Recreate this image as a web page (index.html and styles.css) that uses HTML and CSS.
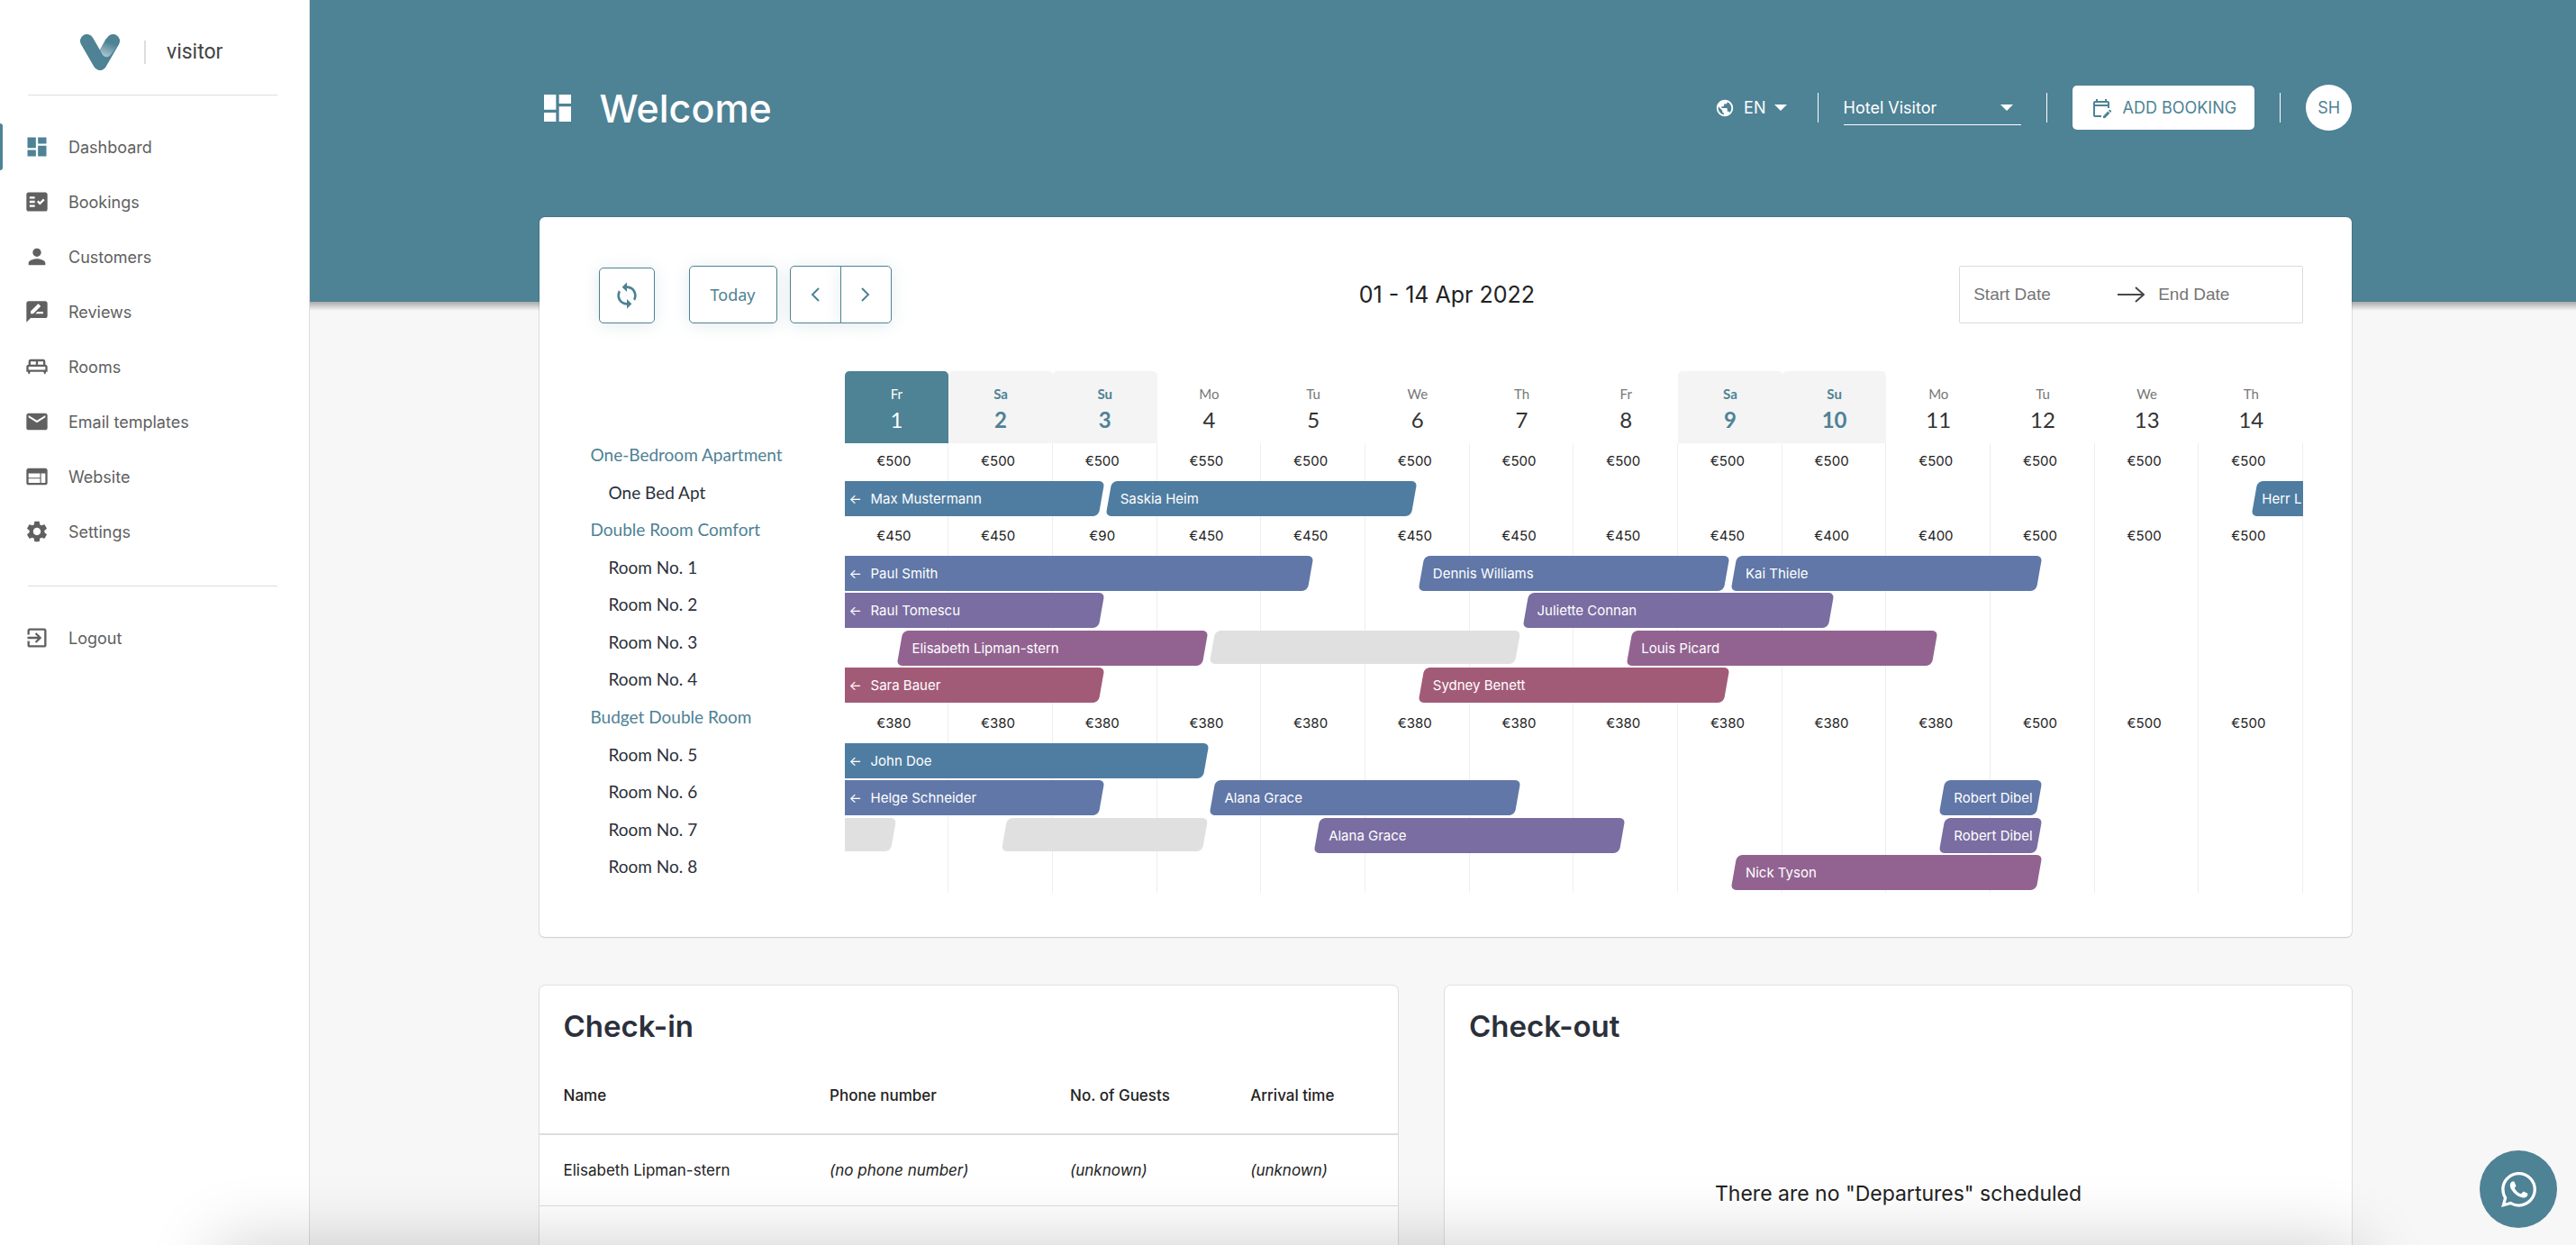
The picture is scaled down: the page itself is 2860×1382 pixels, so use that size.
FILE: index.html
```html
<!DOCTYPE html>
<html lang="en">
<head>
	<meta charset="UTF-8">
	<meta name="viewport" content="width=device-width, initial-scale=1">
	<title>Visitor - Dashboard</title>
	<link rel="stylesheet" href="styles.css">
</head>
<body>
	<div class="app">
		<aside class="sidebar">
			<a class="logo" href="#">
				<svg class="logo-mark" viewBox="0 0 44 40">
					<defs>
						<linearGradient id="fold" x1="0.8" y1="0" x2="0.4" y2="1">
							<stop offset="0.3" stop-color="#4e8295"/>
							<stop offset="1" stop-color="#a9c3cc"/>
						</linearGradient>
					</defs>
					<path d="M7.5 7.5L22 32.5L36.5 7.5" fill="none" stroke="#4e8295" stroke-width="15" stroke-linecap="round" stroke-linejoin="round"/>
					<path d="M22 17L29 4.500L43 11L34.500 22C33 25 29 26.500 26 24C24 22.300 23 19.500 22 17Z" fill="url(#fold)"/>
				</svg>
				<span class="logo-line"></span>
				<span class="logo-text">visitor</span>
			</a>
			<nav class="nav">
				<a class="nav-item active" href="#"><svg viewBox="0 0 24 24"><path d="M3 13h8V3H3v10zm0 8h8v-6H3v6zm10 0h8V11h-8v10zm0-18v6h8V3h-8z"/></svg>Dashboard</a>
				<a class="nav-item" href="#"><svg viewBox="0 0 24 24"><path fill-rule="evenodd" d="M20 3H4c-1.100 0-2 .9-2 2v14c0 1.100.9 2 2 2h16c1.100 0 2-.9 2-2V5c0-1.100-.9-2-2-2zM10 17H5v-2h5v2zm0-4H5v-2h5v2zm0-4H5V7h5v2zm4.820 6L12 12.160l1.410-1.410 1.410 1.420L17.990 9l1.420 1.420L14.820 15z"/></svg>Bookings</a>
				<a class="nav-item" href="#"><svg viewBox="0 0 24 24"><path d="M12 12c2.210 0 4-1.790 4-4s-1.790-4-4-4-4 1.790-4 4 1.790 4 4 4zm0 2c-2.670 0-8 1.340-8 4v2h16v-2c0-2.660-5.330-4-8-4z"/></svg>Customers</a>
				<a class="nav-item" href="#"><svg viewBox="0 0 24 24"><path d="M20 2H4c-1.100 0-1.990.9-1.990 2L2 22l4-4h14c1.100 0 2-.9 2-2V4c0-1.100-.9-2-2-2zM6 14v-2.470l6.880-6.880c.2-.2.510-.2.710 0l1.770 1.770c.2.2.2.510 0 .710L8.470 14H6zm12 0h-7.500l2-2H18v2z"/></svg>Reviews</a>
				<a class="nav-item" href="#"><svg viewBox="0 0 24 24"><path d="M22 12c0-1.100-.9-2-2-2V7c0-1.100-.9-2-2-2H6c-1.100 0-2 .9-2 2v3c-1.100 0-2 .9-2 2v5h1.330L4 19h1l.67-2h12.670l.66 2h1l.67-2H22v-5zm-4-2h-5V7h5v3zM6 7h5v3H6V7zm-2 5h16v3H4v-3z"/></svg>Rooms</a>
				<a class="nav-item" href="#"><svg viewBox="0 0 24 24"><path d="M20 4H4c-1.100 0-1.990.9-1.990 2L2 18c0 1.100.9 2 2 2h16c1.100 0 2-.9 2-2V6c0-1.100-.9-2-2-2zm0 4l-8 5-8-5V6l8 5 8-5v2z"/></svg>Email templates</a>
				<a class="nav-item" href="#"><svg viewBox="0 0 24 24"><path d="M20 4H4c-1.100 0-1.990.9-1.990 2L2 18c0 1.100.9 2 2 2h16c1.100 0 2-.9 2-2V6c0-1.100-.9-2-2-2zm-5 14H4v-4h11v4zm0-5H4V9h11v4zm5 5h-4V9h4v9z"/></svg>Website</a>
				<a class="nav-item" href="#"><svg viewBox="0 0 24 24"><path d="M19.140 12.940c.04-.3.060-.61.060-.94 0-.32-.02-.64-.07-.94l2.030-1.580c.18-.14.230-.41.120-.61l-1.920-3.320c-.12-.22-.37-.29-.59-.22l-2.390.96c-.5-.38-1.030-.7-1.620-.94l-.36-2.540c-.04-.24-.24-.41-.48-.41h-3.840c-.24 0-.43.170-.47.410l-.36 2.540c-.59.240-1.130.570-1.620.94l-2.390-.96c-.22-.08-.47 0-.59.220L2.740 8.870c-.12.210-.08.470.12.610l2.030 1.580c-.05.3-.09.630-.09.940s.02.640.070.940l-2.030 1.580c-.18.140-.23.410-.12.610l1.920 3.320c.12.220.37.290.59.220l2.390-.96c.5.380 1.030.7 1.620.94l.36 2.540c.05.240.24.410.48.410h3.840c.24 0 .44-.17.470-.41l.36-2.540c.59-.24 1.130-.56 1.620-.94l2.390.96c.22.080.47 0 .59-.22l1.920-3.320c.12-.22.070-.47-.12-.61l-2.010-1.580zM12 15.600c-1.980 0-3.600-1.620-3.600-3.600s1.620-3.600 3.600-3.600 3.600 1.620 3.600 3.600-1.620 3.600-3.600 3.600z"/></svg>Settings</a>
			</nav>
			<nav class="nav nav-bottom">
				<a class="nav-item" href="#"><svg viewBox="0 0 24 24"><path d="M10.090 15.590L11.500 17l5-5-5-5-1.410 1.410L12.670 11H3v2h9.670l-2.580 2.590zM19 3H5c-1.110 0-2 .9-2 2v4h2V5h14v14H5v-4H3v4c0 1.100.89 2 2 2h14c1.100 0 2-.9 2-2V5c0-1.100-.9-2-2-2z"/></svg>Logout</a>
			</nav>
		</aside>

		<main class="main">
			<header class="topbar">
				<svg class="title-icon" viewBox="0 0 24 24"><path d="M3 13h8V3H3v10zm0 8h8v-6H3v6zm10 0h8V11h-8v10zm0-18v6h8V3h-8z"/></svg>
				<h1>Welcome</h1>
				<div class="topbar-right">
					<button class="lang" type="button">
						<svg class="globe" viewBox="0 0 24 24"><path d="M12 2C6.480 2 2 6.480 2 12s4.480 10 10 10 10-4.480 10-10S17.520 2 12 2zm-1 17.930c-3.950-.49-7-3.850-7-7.930 0-.62.080-1.210.210-1.790L9 15v1c0 1.100.9 2 2 2v1.930zm6.900-2.540c-.26-.81-1-1.390-1.900-1.390h-1v-3c0-.55-.45-1-1-1H8v-2h2c.55 0 1-.45 1-1V7h2c1.100 0 2-.9 2-2v-.41c2.930 1.190 5 4.060 5 7.410 0 2.080-.8 3.970-2.100 5.390z"/></svg>
						EN
						<svg class="caret" viewBox="0 0 12 6"><path d="M0 0h12L6 6z"/></svg>
					</button>
					<span class="sep"></span>
					<div class="hotel">
						<select aria-label="Hotel"><option>Hotel Visitor</option></select>
						<svg class="caret" viewBox="0 0 12 6"><path d="M0 0h12L6 6z"/></svg>
					</div>
					<span class="sep"></span>
					<button class="add-booking" type="button">
						<svg viewBox="0 0 24 24"><path d="M12 22H5c-1.110 0-2-.9-2-2L3.010 6c0-1.100.88-2 1.990-2h1V2h2v2h8V2h2v2h1c1.100 0 2 .9 2 2v6h-2v-2H5v10h7v2zM5 8h14V6H5v2zm17.130 8.990l.71-.71c.39-.39.39-1.020 0-1.410l-.71-.71c-.39-.39-1.020-.39-1.410 0l-.71.710 2.120 2.120zm-.71.710l-5.300 5.300H14v-2.120l5.300-5.300 2.120 2.120z"/></svg>
						ADD BOOKING
					</button>
					<span class="sep"></span>
					<button class="avatar" type="button">SH</button>
				</div>
			</header>

			<section class="card calendar-card">
				<div class="toolbar">
					<div class="toolbar-left">
						<button class="btn refresh" type="button" aria-label="Refresh">
							<svg viewBox="0 0 24 24"><path d="M12 4V1L8 5l4 4V6c3.310 0 6 2.690 6 6 0 1.010-.25 1.970-.7 2.800l1.460 1.460C19.540 15.030 20 13.570 20 12c0-4.420-3.580-8-8-8zm0 14c-3.310 0-6-2.690-6-6 0-1.010.25-1.970.7-2.800L5.240 7.740C4.460 8.970 4 10.430 4 12c0 4.420 3.580 8 8 8v3l4-4-4-4v3z"/></svg>
						</button>
						<button class="btn today" type="button">Today</button>
						<div class="arrows">
							<button class="btn" type="button" aria-label="Previous"><svg viewBox="0 0 10 16"><path d="M9 1L2 8l7 7"/></svg></button>
							<button class="btn" type="button" aria-label="Next"><svg viewBox="0 0 10 16"><path d="M1 1l7 7-7 7"/></svg></button>
						</div>
					</div>
					<h2 class="period">01 - 14 Apr 2022</h2>
					<div class="range">
						<input type="text" placeholder="Start Date" aria-label="Start Date">
						<svg viewBox="0 0 30 18"><path d="M0 9h28M20 1l9 8-9 8"/></svg>
						<input type="text" placeholder="End Date" aria-label="End Date">
					</div>
				</div>

				<div class="calendar">
					<div class="days">
						<div class="day current"><span>Fr</span><b>1</b></div>
						<div class="day weekend"><span>Sa</span><b>2</b></div>
						<div class="day weekend"><span>Su</span><b>3</b></div>
						<div class="day"><span>Mo</span><b>4</b></div>
						<div class="day"><span>Tu</span><b>5</b></div>
						<div class="day"><span>We</span><b>6</b></div>
						<div class="day"><span>Th</span><b>7</b></div>
						<div class="day"><span>Fr</span><b>8</b></div>
						<div class="day weekend"><span>Sa</span><b>9</b></div>
						<div class="day weekend"><span>Su</span><b>10</b></div>
						<div class="day"><span>Mo</span><b>11</b></div>
						<div class="day"><span>Tu</span><b>12</b></div>
						<div class="day"><span>We</span><b>13</b></div>
						<div class="day"><span>Th</span><b>14</b></div>
					</div>

					<div class="labels">
						<a class="group" href="#">One-Bedroom Apartment</a>
						<span>One Bed Apt</span>
						<a class="group" href="#">Double Room Comfort</a>
						<span>Room No. 1</span>
						<span>Room No. 2</span>
						<span>Room No. 3</span>
						<span>Room No. 4</span>
						<a class="group" href="#">Budget Double Room</a>
						<span>Room No. 5</span>
						<span>Room No. 6</span>
						<span>Room No. 7</span>
						<span>Room No. 8</span>
					</div>

					<div class="lanes">
						<div class="lines"><i></i><i></i><i></i><i></i><i></i><i></i><i></i><i></i><i></i><i></i><i></i><i></i><i></i><i></i></div>
						<div class="prices"><span>€500</span><span>€500</span><span>€500</span><span>€550</span><span>€500</span><span>€500</span><span>€500</span><span>€500</span><span>€500</span><span>€500</span><span>€500</span><span>€500</span><span>€500</span><span>€500</span></div>
						<!-- one lane = 28 half days -->
						<div class="lane">
							<a class="bar c1 from-before" href="#" style="grid-column: 1 / 6"><span>Max Mustermann</span></a>
							<a class="bar c1" href="#" style="grid-column: 6 / 12"><span>Saskia Heim</span></a>
							<a class="bar c1 to-after" href="#" style="grid-column: 28 / 29"><span>Herr L</span></a>
						</div>
						<div class="prices"><span>€450</span><span>€450</span><span>€90</span><span>€450</span><span>€450</span><span>€450</span><span>€450</span><span>€450</span><span>€450</span><span>€400</span><span>€400</span><span>€500</span><span>€500</span><span>€500</span></div>
						<div class="lane">
							<a class="bar c2 from-before" href="#" style="grid-column: 1 / 10"><span>Paul Smith</span></a>
							<a class="bar c2" href="#" style="grid-column: 12 / 18"><span>Dennis Williams</span></a>
							<a class="bar c2" href="#" style="grid-column: 18 / 24"><span>Kai Thiele</span></a>
						</div>
						<div class="lane">
							<a class="bar c3 from-before" href="#" style="grid-column: 1 / 6"><span>Raul Tomescu</span></a>
							<a class="bar c3" href="#" style="grid-column: 14 / 20"><span>Juliette Connan</span></a>
						</div>
						<div class="lane">
							<a class="bar c4" href="#" style="grid-column: 2 / 8"><span>Elisabeth Lipman-stern</span></a>
							<div class="bar blocked" style="grid-column: 8 / 14"></div>
							<a class="bar c4" href="#" style="grid-column: 16 / 22"><span>Louis Picard</span></a>
						</div>
						<div class="lane">
							<a class="bar c5 from-before" href="#" style="grid-column: 1 / 6"><span>Sara Bauer</span></a>
							<a class="bar c5" href="#" style="grid-column: 12 / 18"><span>Sydney Benett</span></a>
						</div>
						<div class="prices"><span>€380</span><span>€380</span><span>€380</span><span>€380</span><span>€380</span><span>€380</span><span>€380</span><span>€380</span><span>€380</span><span>€380</span><span>€380</span><span>€500</span><span>€500</span><span>€500</span></div>
						<div class="lane">
							<a class="bar c1 from-before" href="#" style="grid-column: 1 / 8"><span>John Doe</span></a>
						</div>
						<div class="lane">
							<a class="bar c2 from-before" href="#" style="grid-column: 1 / 6"><span>Helge Schneider</span></a>
							<a class="bar c2" href="#" style="grid-column: 8 / 14"><span>Alana Grace</span></a>
							<a class="bar c2" href="#" style="grid-column: 22 / 24"><span>Robert Dibel</span></a>
						</div>
						<div class="lane">
							<div class="bar blocked from-before" style="grid-column: 1 / 2"></div>
							<div class="bar blocked" style="grid-column: 4 / 8"></div>
							<a class="bar c3" href="#" style="grid-column: 10 / 16"><span>Alana Grace</span></a>
							<a class="bar c3" href="#" style="grid-column: 22 / 24"><span>Robert Dibel</span></a>
						</div>
						<div class="lane">
							<a class="bar c4" href="#" style="grid-column: 18 / 24"><span>Nick Tyson</span></a>
						</div>
					</div>
				</div>
			</section>

			<div class="lists">
				<section class="card">
					<h2>Check-in</h2>
					<table>
						<thead>
							<tr><th>Name</th><th>Phone number</th><th>No. of Guests</th><th>Arrival time</th></tr>
						</thead>
						<tbody>
							<tr><td>Elisabeth Lipman-stern</td><td><em>(no phone number)</em></td><td><em>(unknown)</em></td><td><em>(unknown)</em></td></tr>
						</tbody>
					</table>
				</section>
				<section class="card">
					<h2>Check-out</h2>
					<p class="empty">There are no "Departures" scheduled</p>
				</section>
			</div>
		</main>
	</div>

	<a class="whatsapp" href="#" aria-label="WhatsApp">
		<svg viewBox="0 0 24 24"><path d="M17.472 14.382c-.297-.149-1.758-.867-2.030-.967-.273-.099-.471-.148-.67.150-.197.297-.767.966-.94 1.164-.173.199-.347.223-.644.075-.297-.150-1.255-.463-2.390-1.475-.883-.788-1.480-1.761-1.653-2.059-.173-.297-.018-.458.130-.606.134-.133.298-.347.446-.520.149-.174.198-.298.298-.497.099-.198.050-.371-.025-.520-.075-.149-.669-1.612-.916-2.207-.242-.579-.487-.500-.669-.510-.173-.008-.371-.010-.570-.010-.198 0-.520.074-.792.372-.272.297-1.040 1.016-1.040 2.479 0 1.462 1.065 2.875 1.213 3.074.149.198 2.096 3.200 5.077 4.487.709.306 1.262.489 1.694.625.712.227 1.360.195 1.871.118.571-.085 1.758-.719 2.006-1.413.248-.694.248-1.289.173-1.413-.074-.124-.272-.198-.570-.347m-5.421 7.403h-.004a9.870 9.870 0 0 1-5.031-1.378l-.361-.214-3.741.982.998-3.648-.235-.374a9.860 9.860 0 0 1-1.510-5.260c.001-5.450 4.436-9.884 9.888-9.884 2.640 0 5.122 1.030 6.988 2.898a9.825 9.825 0 0 1 2.893 6.994c-.003 5.450-4.437 9.884-9.885 9.884m8.413-18.297A11.815 11.815 0 0 0 12.050 0C5.495 0 .160 5.335.157 11.892c0 2.096.547 4.142 1.588 5.945L.057 24l6.305-1.654a11.882 11.882 0 0 0 5.683 1.448h.005c6.554 0 11.890-5.335 11.893-11.893a11.821 11.821 0 0 0-3.480-8.413z"/></svg>
	</a>
	<div class="bottom-shade"></div>
</body>
</html>
```
FILE: styles.css
```css
*{
	box-sizing: border-box;
	margin: 0;
	padding: 0;
}
body{
	font-family: Inter, "Liberation Sans", sans-serif;
	font-size: 18px;
	color: #222;
	background: #f7f7f7;
}
a{
	color: inherit;
	text-decoration: none;
}
button, input, select{
	font: inherit;
	color: inherit;
	border: 0;
	background: none;
}
button{
	cursor: pointer;
}
svg{
	display: block;
	flex: none;
	fill: currentColor;
}
.app{
	display: flex;
	height: 100vh;
	overflow: hidden;
}

/* sidebar */
.sidebar{
	flex: none;
	width: 344px;
	background: #fff;
	border-right: 1px solid #ddd;
	color: #606060;
}
.logo{
	display: flex;
	align-items: center;
	height: 106px;
	margin: 0 35px 0 31px;
	padding: 10px 0 0 58px;
	border-bottom: 1px solid #ddd;
}
.logo-mark{
	width: 44px;
	height: 40px;
}
.logo-line{
	width: 2px;
	height: 26px;
	margin: 0 23px 0 27px;
	background: #ddd;
}
.logo-text{
	font-family: Roboto, sans-serif;
	font-size: 23px;
	line-height: 26px;
	color: #444;
}
.nav{
	display: flex;
	flex-direction: column;
	gap: 9px;
	padding-top: 31px;
}
.nav-item{
	position: relative;
	display: flex;
	align-items: center;
	gap: 21px;
	height: 52px;
	padding-left: 27px;
}
.nav-item svg{
	width: 28px;
	height: 28px;
}
.nav-item.active::before{
	content: "";
	position: absolute;
	left: 0;
	top: 0;
	width: 3px;
	height: 100%;
	border-radius: 0 3px 3px 0;
	background: #4e8295;
}
.nav-item.active svg{
	color: #4e8295;
}
.nav-bottom{
	margin: 34px 35px 0 31px;
	border-top: 1px solid #ddd;
}
.nav-bottom .nav-item{
	margin-left: -31px;
}

/* content */
.main{
	position: relative;
	flex: 1;
	min-width: 0;
	padding: 0 8.7% 0 8.9%;
	background: linear-gradient(#4e8295, #4e8295) no-repeat 0 0 / 100% 335px;
}
.main::before{
	content: "";
	position: absolute;
	left: 0;
	right: 0;
	top: 335px;
	height: 10px;
	background: linear-gradient(#aaa, #f7f7f7);
}
.topbar{
	display: flex;
	align-items: center;
	height: 241px;
	padding-bottom: 2px;
	color: #fff;
}
.title-icon{
	width: 40px;
	height: 40px;
}
h1{
	margin-left: 27px;
	font-size: 43px;
	font-weight: 500;
	line-height: 52px;
}
.topbar-right{
	display: flex;
	align-items: center;
	margin-left: auto;
}
.lang{
	display: flex;
	align-items: center;
}
.globe{
	width: 22px;
	height: 22px;
	margin-right: 10px;
}
.caret{
	width: 14px;
	height: 7px;
}
.lang .caret{
	margin-left: 9px;
}
.sep{
	width: 1px;
	height: 33px;
	margin: 0 28px;
	background: #fff;
}
.lang + .sep{
	margin-left: 34px;
}
.hotel{
	position: relative;
	width: 197px;
	border-bottom: 1px solid #fff;
}
.hotel select{
	width: 100%;
	height: 38px;
	appearance: none;
}
.hotel .caret{
	position: absolute;
	right: 9px;
	top: 16px;
	pointer-events: none;
}
.add-booking{
	display: flex;
	align-items: center;
	gap: 12px;
	height: 49px;
	padding: 0 20px;
	background: #fff;
	border-radius: 5px;
	color: #4e8295;
}
.add-booking svg{
	width: 24px;
	height: 24px;
}
.avatar{
	width: 51px;
	height: 51px;
	background: #fff;
	border-radius: 50%;
	color: #4e8295;
}
.card{
	position: relative;
	background: #fff;
	border-radius: 6px;
	box-shadow: 0 0 0 1px rgba(0,0,0,0.08), 0 1px 2px rgba(0,0,0,0.1);
}
.calendar-card{
	padding: 54px 54px 49px 57px;
}

/* toolbar */
.toolbar{
	display: grid;
	grid-template-columns: 1fr auto 1fr;
	align-items: center;
	margin-bottom: 53px;
}
.toolbar-left{
	display: flex;
	align-items: flex-end;
	padding-left: 9px;
}
.btn{
	display: flex;
	align-items: center;
	justify-content: center;
	height: 64px;
	border: 1px solid #4e8295;
	border-radius: 5px;
	background: #fff;
	color: #4e8295;
	box-shadow: 0 2px 18px rgba(78,130,149,0.16);
}
.refresh{
	width: 62px;
	height: 62px;
	margin-right: 38px;
}
.refresh svg{
	width: 32px;
	height: 32px;
}
.today{
	width: 98px;
	margin-right: 14px;
	font-family: "Noto Sans", sans-serif;
}
.arrows{
	display: flex;
}
.arrows .btn{
	width: 57px;
}
.arrows .btn:first-child{
	border-radius: 5px 0 0 5px;
}
.arrows .btn:last-child{
	margin-left: -1px;
	border-radius: 0 5px 5px 0;
}
.arrows svg{
	width: 10px;
	height: 16px;
	fill: none;
	stroke: currentColor;
	stroke-width: 2;
}
.period{
	font-size: 25px;
	font-weight: 400;
}
.range{
	display: flex;
	align-items: center;
	justify-self: end;
	width: 382px;
	height: 64px;
	padding-left: 15px;
	border: 1px solid #dbdbdb;
	border-radius: 2px;
	font-family: "Liberation Sans", sans-serif;
	font-size: 19px;
}
.range input{
	flex: 1;
	min-width: 0;
}
.range input::placeholder{
	color: #757575;
}
.range svg{
	width: 30px;
	height: 18px;
	margin-right: 15px;
	fill: none;
	stroke: #484848;
	stroke-width: 2;
}

/* calendar */
.calendar{
	display: grid;
	grid-template-columns: 282px 1fr;
}
.days{
	grid-column: 2;
	display: grid;
	grid-template-columns: repeat(14, 1fr);
	height: 80px;
	font-family: Lato, sans-serif;
}
.day{
	display: flex;
	flex-direction: column;
	align-items: center;
	padding-top: 15px;
	border-radius: 5px 5px 0 0;
	color: #777;
}
.day span{
	font-size: 15px;
	line-height: 20px;
}
.day b{
	font-size: 24px;
	font-weight: 400;
	line-height: 38px;
	color: #333;
}
.weekend, .weekend b{
	color: #4e8295;
	font-weight: 700;
}
.weekend{
	background: #f4f4f4;
}
.current, .current b{
	color: #fff;
}
.current{
	background: #4e8295;
}
.labels, .lanes{
	display: grid;
	grid-template-rows: repeat(12, 1fr);
	height: 499px;
}
.labels{
	font-family: Lato, sans-serif;
	font-size: 19px;
	line-height: 26px;
	color: #2b303b;
}
.labels span{
	padding-left: 20px;
}
.labels .group{
	color: #4e8295;
}
.lanes{
	position: relative;
	overflow: hidden;
}
.lines{
	position: absolute;
	inset: 0;
	display: grid;
	grid-template-columns: repeat(14, 1fr);
}
.lines i{
	border-right: 1px solid #eee;
}
.prices, .lane{
	position: relative;
	display: grid;
}
.prices{
	grid-template-columns: repeat(14, 1fr);
	font-size: 15px;
	line-height: 39px;
	text-align: center;
}
.prices span{
	padding-right: 6px;
}
.lane{
	grid-template-columns: repeat(28, 1fr);
	align-items: start;
}
.bar{
	position: relative;
	display: block;
	min-width: 0;
	height: 39px;
	padding: 0 6px 0 17px;
	font-size: 15px;
	line-height: 40px;
	color: #fff;
}
/* slanted background, the text stays upright */
.bar::before{
	content: "";
	position: absolute;
	top: 0;
	bottom: 0;
	left: 4px;
	right: 4px;
	border-radius: 6px;
	background: var(--bar);
	transform: skewX(-10deg);
}
.bar span{
	position: relative;
	display: block;
	overflow: hidden;
	white-space: nowrap;
}
.from-before{
	padding-left: 5px;
}
.from-before::before{
	left: -20px;
}
.from-before span::before{
	content: "←";
	display: inline-block;
	width: 24px;
}
.to-after{
	padding: 0 0 0 12px;
}
.to-after::before{
	right: -20px;
}
.c1{
	--bar: #4f7da1;
}
.c2{
	--bar: #6077a7;
}
.c3{
	--bar: #7a6da1;
}
.c4{
	--bar: #926391;
}
.c5{
	--bar: #a25b77;
}
.blocked{
	--bar: #e0e0e0;
	height: 37px;
}

/* check-in / check-out */
.lists{
	display: grid;
	grid-template-columns: 954fr 1008fr;
	gap: 52px;
	margin-top: 54px;
}
.lists .card{
	min-height: 420px;
}
.lists h2{
	padding: 25px 27px 0;
	font-size: 33px;
	font-weight: 600;
	line-height: 40px;
	color: #2b303b;
}
table{
	width: 100%;
	margin-top: 14px;
	border-collapse: collapse;
	font-size: 17px;
	text-align: left;
}
th, td{
	height: 79px;
	padding-left: 27px;
	border-bottom: 1px solid #ddd;
	white-space: nowrap;
}
th{
	height: 86px;
	border-bottom-width: 2px;
	font-weight: 500;
}
th:nth-child(2){
	width: 28%;
}
th:nth-child(3){
	width: 21%;
}
th:nth-child(4){
	width: 20%;
}
.empty{
	margin-top: 148px;
	font-size: 23px;
	line-height: 36px;
	text-align: center;
}
.whatsapp{
	position: fixed;
	right: 21px;
	bottom: 19px;
	z-index: 2;
	display: flex;
	align-items: center;
	justify-content: center;
	width: 86px;
	height: 86px;
	border-radius: 50%;
	background: #4e8295;
	color: #fff;
}
.whatsapp svg{
	width: 39px;
	height: 39px;
}
.bottom-shade{
	position: fixed;
	left: 240px;
	right: 240px;
	top: 100%;
	height: 100px;
	box-shadow: 0 0 80px rgba(0,0,0,0.2);
}
```
